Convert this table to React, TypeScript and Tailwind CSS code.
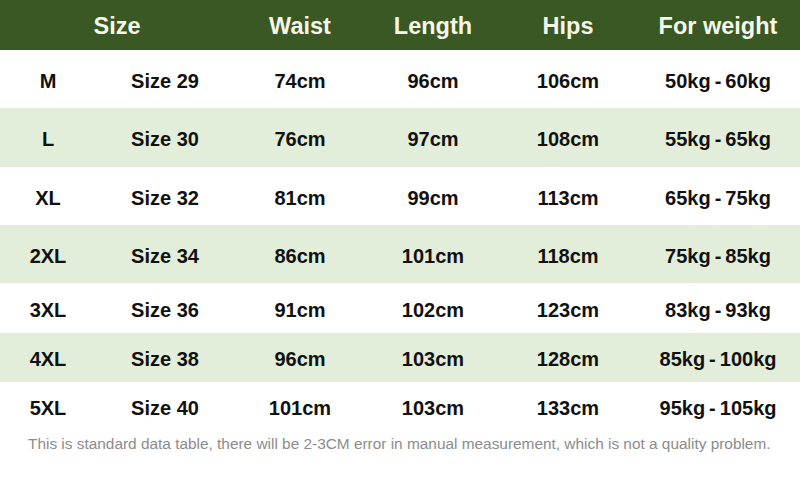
import React from 'react';

type Row = [string, string, string, string, string, string];

const rows: Row[] = [
    ['M', 'Size 29', '74cm', '96cm', '106cm', '50kg\u2009-\u200960kg'],
    ['L', 'Size 30', '76cm', '97cm', '108cm', '55kg\u2009-\u200965kg'],
    ['XL', 'Size 32', '81cm', '99cm', '113cm', '65kg\u2009-\u200975kg'],
    ['2XL', 'Size 34', '86cm', '101cm', '118cm', '75kg\u2009-\u200985kg'],
    ['3XL', 'Size 36', '91cm', '102cm', '123cm', '83kg\u2009-\u200993kg'],
    ['4XL', 'Size 38', '96cm', '103cm', '128cm', '85kg\u2009-\u2009100kg'],
    ['5XL', 'Size 40', '101cm', '103cm', '133cm', '95kg\u2009-\u2009105kg'],
];

// row heights read off the picture
const heights = ['h-[58px]', 'h-[59px]', 'h-[58px]', 'h-[58px]', 'h-[50px]', 'h-[49px]', 'h-[49px]'];

const cols = 'grid grid-cols-[96px_138px_132px_134px_136px_164px]';

const App: React.FC = () => {
    return (
        <div className="w-[800px] h-[492px] bg-white font-['Liberation_Sans',Arial,sans-serif] overflow-hidden">
            <div className={`${cols} h-[50px] items-center pt-[3px] bg-[#3a5823] text-[#f6f6ea] text-[23.5px] font-bold`}>
                <div className="col-span-2 text-center">Size</div>
                <div className="text-center">Waist</div>
                <div className="text-center">Length</div>
                <div className="text-center">Hips</div>
                <div className="text-center">For weight</div>
            </div>
            {rows.map((r, i) => (
                <div
                    key={r[0]}
                    className={`${cols} ${heights[i]} items-center pt-[3px] text-[20px] font-bold text-[#111] ${i % 2 === 1 ? 'bg-[#e2eed9]' : 'bg-white'}`}
                >
                    {r.map((c, j) => (
                        <div key={j} className="text-center whitespace-nowrap">
                            {c}
                        </div>
                    ))}
                </div>
            ))}
            <p className="mt-[1px] pl-[28px] text-[15.4px] text-[#8c8c8c] whitespace-nowrap">
                This is standard data table, there will be 2-3CM error in manual measurement, which is not a quality problem.
            </p>
        </div>
    );
};

export default App;
